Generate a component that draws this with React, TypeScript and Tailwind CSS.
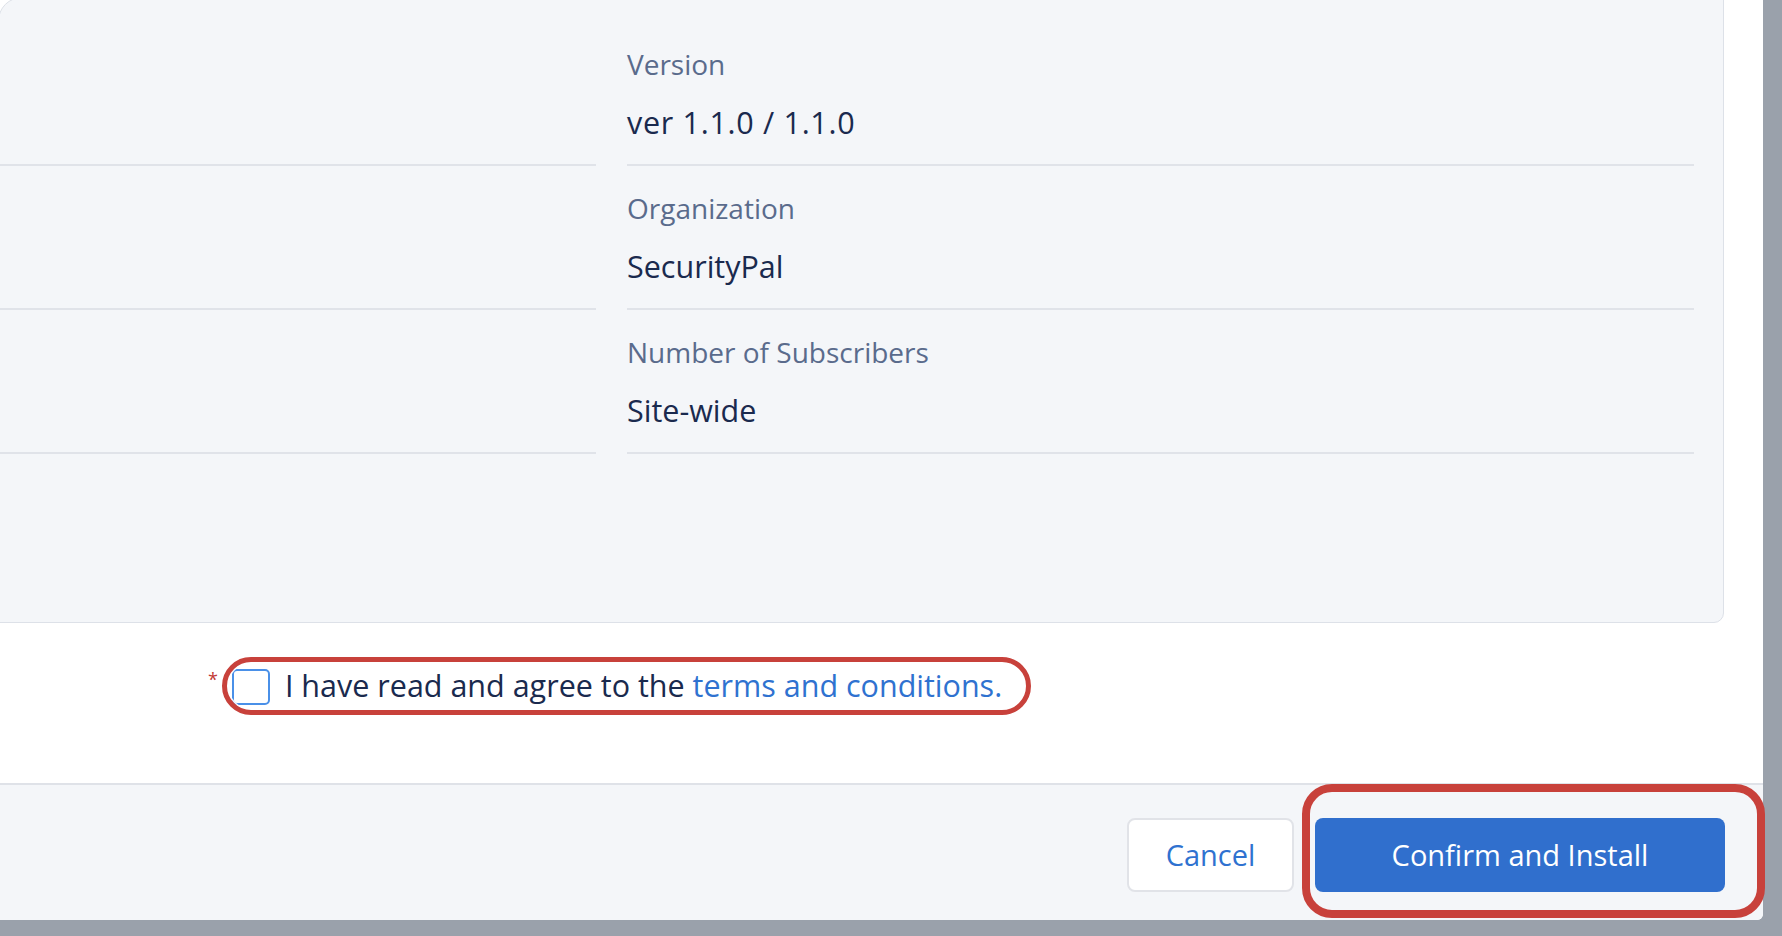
export default function App() {
  const rows = [
    { label: "Version", value: "ver 1.1.0 / 1.1.0", cls: "tracking-[0.7px]" },
    { label: "Organization", value: "SecurityPal", cls: "" },
    { label: "Number of Subscribers", value: "Site-wide", cls: "" },
  ];
  return (
    <div className="relative w-[1782px] h-[936px] overflow-hidden bg-[#9aa1ab] font-['Open_Sans',sans-serif]">
      <div className="w-[1763px] h-[920px] bg-white rounded-br-[6px] overflow-hidden flex flex-col">
        <div className="flex-1 flex flex-col">
          <div className="-ml-[2px] -mt-[3px] w-[1726px] h-[626px] flex-none bg-[#f4f6f9] border border-[#dde1e8] rounded-tl-[24px] rounded-br-[10px] flex gap-[31px] pr-[29px] pt-[24px]">
            <div className="w-[597px] flex-none flex flex-col">
              {rows.map((r) => (
                <div key={r.label} className="h-[144px] border-b-2 border-[#e0e3e9]" />
              ))}
            </div>
            <div className="flex-1 flex flex-col">
              {rows.map((r) => (
                <div key={r.label} className="h-[144px] border-b-2 border-[#e0e3e9] pt-[22px]">
                  <div className="text-[28px] leading-[40px] text-[#5a6b8c]">{r.label}</div>
                  <div className={"mt-[17px] text-[30.5px] leading-[42px] text-[#1a2a4e] " + r.cls}>{r.value}</div>
                </div>
              ))}
            </div>
          </div>
          <div className="mt-[41px] h-[46px] flex items-start pl-[208px]">
            <span className="mt-[6px] text-[18px] leading-none text-[#c23934]">*</span>
            <span className="ml-[14px] mt-[5px] w-[38px] h-[36px] flex-none bg-white border-2 border-[#4a90e8] rounded-[5px]" />
            <span className="ml-[15px] text-[30.5px] leading-[42px] text-[#1a2a4e] whitespace-nowrap">
              I have read and agree to the <span className="text-[#2f72d0]">terms and conditions.</span>
            </span>
          </div>
        </div>
        <div className="h-[137px] flex-none border-t-2 border-[#dfe2e8] bg-[#f4f6f9] flex justify-end items-start pt-[33px] pr-[38px] gap-[21px]">
          <button className="w-[167px] h-[74px] bg-white border-2 border-[#e1e3e8] rounded-[8px] text-[29px] text-[#2f72d0] flex items-center justify-center">
            Cancel
          </button>
          <button className="w-[410px] h-[74px] bg-[#306fcd] rounded-[8px] text-[29px] text-white flex items-center justify-center">
            Confirm and Install
          </button>
        </div>
      </div>
      <div className="absolute left-[222px] top-[657px] w-[809px] h-[58px] border-[5px] border-[#c8413b] rounded-full shadow-[inset_0_0_0_1.5px_rgba(255,255,255,0.9)]" />
      <div className="absolute left-[1302px] top-[784px] w-[463px] h-[134px] border-[8px] border-[#c8413b] rounded-[30px]" />
    </div>
  );
}
